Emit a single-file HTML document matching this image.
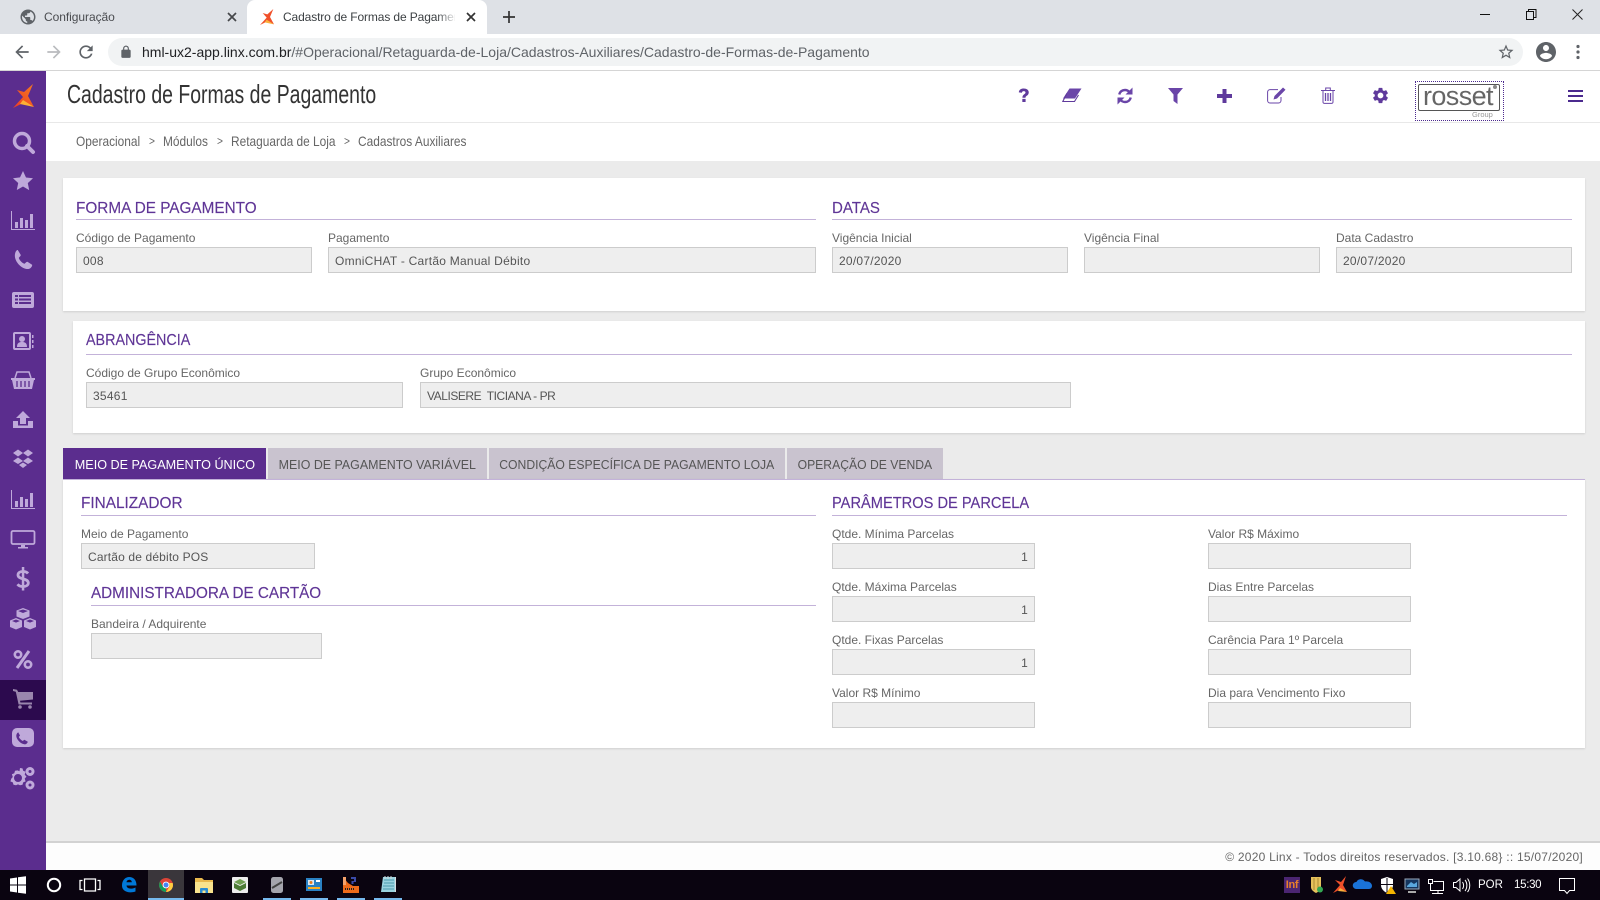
<!DOCTYPE html>
<html lang="pt"><head><meta charset="utf-8"><title>Cadastro de Formas de Pagamento</title>
<style>
html,body{margin:0;padding:0;width:1600px;height:900px;overflow:hidden;background:#ebebeb;font-family:"Liberation Sans",sans-serif}
.a,.l,.h,.r,.i,.t,.b,svg{position:absolute}
.a{white-space:nowrap}
.l{font-size:12px;line-height:14px;color:#666;white-space:nowrap}
.h{font-size:16px;line-height:20px;color:#5f3596;white-space:nowrap;transform-origin:0 50%;-webkit-text-stroke:.15px #5f3596}
.r{height:1px;background:#c3b2d9}
.i{box-sizing:border-box;background:#eee;border:1px solid #ccc;height:26px;font-size:12px;line-height:26px;color:#555;padding:0 6px;white-space:nowrap;letter-spacing:.25px}
.t{top:448px;height:31px;line-height:33px;font-size:13px;text-align:center;background:#c9c3cf;color:#555;white-space:nowrap}
.t span{display:inline-block}
.b{top:132px;font-size:14px;line-height:18px;color:#666;white-space:nowrap;transform-origin:0 50%;transform:scaleX(.85)}
.card{position:absolute;background:#fff;box-shadow:0 1px 2px rgba(0,0,0,.12)}
</style></head><body>

<!-- browser chrome -->
<div class="a" style="left:0;top:0;width:1600px;height:34px;background:#dee1e6"></div>
<div class="a" style="left:0;top:34px;width:1600px;height:36px;background:#fff"></div>
<div class="a" style="left:0;top:70px;width:1600px;height:1px;background:#d5d5d5"></div>
<div class="a" style="left:247px;top:0;width:240px;height:34px;background:#fff;border-radius:8px 8px 0 0"></div>
<svg style="left:19px;top:8px" width="18" height="18" viewBox="0 0 24 24"><path fill="#5f6368" d="M12 2C6.48 2 2 6.48 2 12s4.48 10 10 10 10-4.48 10-10S17.52 2 12 2zm-1 17.93c-3.95-.49-7-3.85-7-7.93 0-.62.08-1.21.21-1.79L9 15v1c0 1.1.9 2 2 2v1.93zm6.9-2.54c-.26-.81-1-1.39-1.9-1.39h-1v-3c0-.55-.45-1-1-1H8v-2h2c.55 0 1-.45 1-1V7h2c1.1 0 2-.9 2-2v-.41c2.93 1.19 5 4.06 5 7.41 0 2.08-.8 3.97-2.1 5.39z"/></svg>
<div class="a" style="left:44px;top:10px;font-size:12px;line-height:15px;color:#4a4c50;letter-spacing:-.05px">Configuração</div>
<svg style="left:227px;top:12px" width="10" height="10" viewBox="0 0 10 10"><path d="M1 1l8 8M9 1l-8 8" stroke="#45474a" stroke-width="1.7"/></svg>
<svg style="left:260px;top:9px" width="14" height="16" viewBox="13 84 21 24"><path fill="#f0502a" d="M13 108L23 97 17 90 24 92 33 84 28 96 34 107 25 102z"/><path fill="#fbb03b" d="M23 100L34 107 20 104z"/></svg>
<div class="a" style="left:283px;top:10px;width:172px;overflow:hidden;font-size:12px;line-height:15px;color:#3c4043;letter-spacing:-.12px">Cadastro de Formas de Pagamen</div>
<div class="a" style="left:437px;top:8px;width:20px;height:18px;background:linear-gradient(90deg,rgba(255,255,255,0),#fff)"></div>
<svg style="left:466px;top:12px" width="10" height="10" viewBox="0 0 10 10"><path d="M1 1l8 8M9 1l-8 8" stroke="#333" stroke-width="1.7"/></svg>
<svg style="left:503px;top:11px" width="12" height="12" viewBox="0 0 12 12"><path d="M6 0v12M0 6h12" stroke="#333" stroke-width="1.7"/></svg>
<svg style="left:1480px;top:9px" width="11" height="11" viewBox="0 0 11 11"><path d="M0 5.5h10" stroke="#111"/></svg>
<svg style="left:1526px;top:9px" width="11" height="11" viewBox="0 0 11 11"><path d="M.5 2.5h7v8h-7zM2.5 2.5v-2h7.5v8H7.5" stroke="#111" fill="none"/></svg>
<svg style="left:1572px;top:9px" width="11" height="11" viewBox="0 0 11 11"><path d="M.5.5l10 10M10.5.5l-10 10" stroke="#222"/></svg>

<svg style="left:12px;top:42px" width="20" height="20" viewBox="0 0 24 24"><path fill="#5f6368" d="M20 11H7.83l5.59-5.59L12 4l-8 8 8 8 1.41-1.41L7.83 13H20v-2z"/></svg>
<svg style="left:44px;top:42px" width="20" height="20" viewBox="0 0 24 24"><path fill="#b9bbbe" d="M12 4l-1.41 1.41L16.17 11H4v2h12.17l-5.58 5.59L12 20l8-8z"/></svg>
<svg style="left:76px;top:42px" width="20" height="20" viewBox="0 0 24 24"><path fill="#5f6368" d="M17.65 6.35C16.2 4.9 14.21 4 12 4c-4.42 0-7.99 3.58-7.99 8s3.57 8 7.99 8c3.73 0 6.84-2.55 7.73-6h-2.08c-.82 2.33-3.04 4-5.65 4-3.31 0-6-2.69-6-6s2.69-6 6-6c1.66 0 3.14.69 4.22 1.78L13 11h7V4l-2.35 2.35z"/></svg>
<div class="a" style="left:108px;top:38px;width:1415px;height:28px;border-radius:14px;background:#f1f3f4"></div>
<svg style="left:119px;top:45px" width="14" height="14" viewBox="0 0 24 24"><path fill="#5f6368" d="M18 8h-1V6c0-2.76-2.24-5-5-5S7 3.24 7 6v2H6c-1.1 0-2 .9-2 2v10c0 1.1.9 2 2 2h12c1.1 0 2-.9 2-2V10c0-1.1-.9-2-2-2zM9 6c0-1.66 1.34-3 3-3s3 1.34 3 3v2H9V6z"/></svg>
<div class="a" style="left:142px;top:44px;font-size:14px;line-height:16px;color:#5f6368"><span style="color:#202124">hml-ux2-app.linx.com.br</span>/#Operacional/Retaguarda-de-Loja/Cadastros-Auxiliares/Cadastro-de-Formas-de-Pagamento</div>
<svg style="left:1497px;top:43px" width="18" height="18" viewBox="0 0 24 24"><path fill="#5f6368" d="M22 9.24l-7.19-.62L12 2 9.19 8.63 2 9.24l5.46 4.73L5.82 21 12 17.27 18.18 21l-1.63-7.03L22 9.24zM12 15.4l-3.76 2.27 1-4.28-3.32-2.88 4.38-.38L12 6.1l1.71 4.04 4.38.38-3.32 2.88 1 4.28L12 15.4z"/></svg>
<svg style="left:1534px;top:40px" width="24" height="24" viewBox="0 0 24 24"><path fill="#5f6368" d="M12 2C6.48 2 2 6.48 2 12s4.48 10 10 10 10-4.48 10-10S17.52 2 12 2zm0 3c1.66 0 3 1.34 3 3s-1.34 3-3 3-3-1.34-3-3 1.34-3 3-3zm0 14.2c-2.5 0-4.71-1.28-6-3.22.03-1.99 4-3.08 6-3.08 1.99 0 5.97 1.09 6 3.08-1.29 1.94-3.5 3.22-6 3.22z"/></svg>
<svg style="left:1575px;top:44px" width="6" height="16" viewBox="0 0 6 16"><circle cx="3" cy="2.5" r="1.6" fill="#5f6368"/><circle cx="3" cy="8" r="1.6" fill="#5f6368"/><circle cx="3" cy="13.5" r="1.6" fill="#5f6368"/></svg>

<!-- header -->
<div class="a" style="left:46px;top:71px;width:1554px;height:90px;background:#fff"></div>
<div class="a" style="left:46px;top:122px;width:1554px;height:1px;background:#e8e8e8"></div>
<div class="a" style="left:67px;top:78px;font-size:26px;line-height:32px;color:#333;transform-origin:0 50%;transform:scaleX(.748)">Cadastro de Formas de Pagamento</div>

<svg style="left:1018px;top:88px" width="12" height="15" viewBox="0 0 13 17"><path fill="#5f3a9c" d="M.6 5C.8 2 3 .5 6.3.5c3.2 0 5.6 1.7 5.6 4.4 0 2-1.100 3-2.300 3.900-1 .7-1.400 1.200-1.400 2.200H4.700c0-1.900.6-2.800 1.900-3.800 1-.7 1.600-1.200 1.600-2.100 0-1-.8-1.500-1.900-1.500-1.300 0-2 .7-2.200 1.800zM4.600 12.300h3.700v3.600H4.600z"/></svg>
<svg style="left:1062px;top:88px" width="20" height="15" viewBox="0 0 20 15"><path fill="#6a45a8" d="M7.500.5H19.500L13 10.500H1z"/><path fill="none" stroke="#5f3a9c" stroke-width="1.100" d="M4.800 5.500L.8 13.500H12.500L16.500 7"/></svg>
<svg style="left:1117px;top:87px" width="16" height="18" viewBox="0 0 16 18"><path fill="none" stroke="#6a45a8" stroke-width="2.400" d="M2.300 7.500C3 4.500 5.300 3 8 3c1.900 0 3.300.8 4.400 2M13.700 10.500C13 13.500 10.700 15 8 15c-1.900 0-3.300-.8-4.400-2"/><path fill="#6a45a8" d="M15.500.5v7h-7zM.5 17.500v-7h7z"/></svg>
<svg style="left:1168px;top:88px" width="15" height="16" viewBox="0 0 15 16"><path fill="#6a45a8" d="M0 0h15L9.500 6.500V16L5.500 13V6.500z"/></svg>
<svg style="left:1217px;top:89px" width="15" height="14" viewBox="0 0 15 14"><path fill="#5f3a9c" d="M5.500 0h4v5H15v4H9.500v5h-4V9H0V5h5.500z"/></svg>
<svg style="left:1267px;top:87px" width="19" height="17" viewBox="0 0 19 17"><path fill="none" stroke="#6a45a8" stroke-width="1" d="M14 10v3.500a2.500 2.500 0 0 1-2.500 2.500H3A2.500 2.500 0 0 1 .6 13.500V5A2.500 2.500 0 0 1 3 2.600h8"/><path fill="#6a45a8" d="M16 .5l2.500 2.300-8.500 8.700-3.500 1 1-3.500z"/></svg>
<svg style="left:1321px;top:87px" width="14" height="17" viewBox="0 0 14 17"><path fill="none" stroke="#6a45a8" stroke-width="1" d="M0 3.500h14M2 3.500V15a1.500 1.500 0 0 0 1.500 1.400h7A1.500 1.500 0 0 0 12 15V3.500M4.700 3.300V1h4.600v2.300"/><path stroke="#6a45a8" stroke-width="1.300" d="M4.500 6v8M7 6v8M9.500 6v8"/></svg>
<svg style="left:1371px;top:86px" width="19" height="19" viewBox="0 0 24 24"><path fill="#5f3a9c" d="M19.140 12.940c.04-.3.06-.61.06-.94 0-.32-.02-.64-.07-.94l2.030-1.580c.18-.14.23-.41.12-.61l-1.920-3.320c-.12-.22-.37-.29-.59-.22l-2.390.96c-.5-.38-1.030-.7-1.620-.94l-.36-2.540c-.04-.24-.24-.41-.48-.41h-3.840c-.24 0-.43.17-.47.41l-.36 2.540c-.59.24-1.130.57-1.620.94l-2.390-.96c-.22-.08-.47 0-.59.22L2.740 8.870c-.12.21-.08.47.12.61l2.030 1.580c-.05.3-.09.63-.09.94s.02.64.07.94l-2.030 1.580c-.18.14-.23.41-.12.61l1.920 3.320c.12.22.37.29.59.22l2.390-.96c.5.38 1.030.7 1.620.94l.36 2.540c.05.24.24.41.48.41h3.840c.24 0 .44-.17.47-.41l.36-2.540c.59-.24 1.130-.56 1.620-.94l2.390.96c.22.08.47 0 .59-.22l1.920-3.320c.12-.22.07-.47-.12-.61l-2.010-1.580zM12 15.600c-1.980 0-3.600-1.620-3.600-3.600s1.620-3.600 3.600-3.600 3.600 1.620 3.600 3.600-1.620 3.600-3.600 3.600z"/></svg>

<div class="a" style="left:1415px;top:81px;width:87px;height:38px;border:1px dotted #4b2a8e"></div>
<div class="a" style="left:1418px;top:84px;width:80px;height:25px;border:1px solid #555;border-radius:2px;background:#fff"></div>
<div class="a" style="left:1423px;top:80px;font-size:27px;line-height:32px;color:#666;letter-spacing:-.6px">rosset</div>
<div class="a" style="left:1493px;top:85px;width:4px;height:4px;border-radius:50%;background:#888"></div>
<div class="a" style="left:1472px;top:110px;font-size:7.500px;line-height:9px;color:#999">Group</div>
<svg style="left:1568px;top:90px" width="15" height="12" viewBox="0 0 15 12"><path fill="#4b2a8e" d="M0 0h15v2H0zM0 5h15v2H0zM0 10h15v2H0z"/></svg>

<div class="b" style="left:76px">Operacional</div>
<div class="b" style="left:149px;font-size:12px">&gt;</div>
<div class="b" style="left:163px;transform:scaleX(.85)">Módulos</div>
<div class="b" style="left:217px;font-size:12px">&gt;</div>
<div class="b" style="left:231px">Retaguarda de Loja</div>
<div class="b" style="left:344px;font-size:12px">&gt;</div>
<div class="b" style="left:358px">Cadastros Auxiliares</div>

<!-- card 1 -->
<div class="card" style="left:63px;top:178px;width:1522px;height:133px"></div>
<div class="h" style="left:76px;top:199px;transform:scaleX(.957)">FORMA DE PAGAMENTO</div><div class="r" style="left:76px;top:219px;width:740px"></div>
<div class="h" style="left:832px;top:199px;transform:scaleX(.94)">DATAS</div><div class="r" style="left:832px;top:219px;width:740px"></div>
<div class="l" style="left:76px;top:231px">Código de Pagamento</div><div class="i" style="left:76px;top:247px;width:236px">008</div>
<div class="l" style="left:328px;top:231px">Pagamento</div><div class="i" style="left:328px;top:247px;width:488px">OmniCHAT - Cartão Manual Débito</div>
<div class="l" style="left:832px;top:231px">Vigência Inicial</div><div class="i" style="left:832px;top:247px;width:236px">20/07/2020</div>
<div class="l" style="left:1084px;top:231px">Vigência Final</div><div class="i" style="left:1084px;top:247px;width:236px"></div>
<div class="l" style="left:1336px;top:231px">Data Cadastro</div><div class="i" style="left:1336px;top:247px;width:236px">20/07/2020</div>

<!-- card 2 -->
<div class="card" style="left:73px;top:321px;width:1512px;height:112px"></div>
<div class="h" style="left:86px;top:331px;transform:scaleX(.895)">ABRANGÊNCIA</div><div class="r" style="left:86px;top:354px;width:1486px"></div>
<div class="l" style="left:86px;top:366px">Código de Grupo Econômico</div><div class="i" style="left:86px;top:382px;width:317px">35461</div>
<div class="l" style="left:420px;top:366px">Grupo Econômico</div><div class="i" style="left:420px;top:382px;width:651px;letter-spacing:-.45px">VALISERE&nbsp; TICIANA - PR</div>

<!-- tabs -->
<div class="t" style="left:63px;width:203px;background:#5b2d8e;color:#fff"><span style="transform:scaleX(.97)">MEIO DE PAGAMENTO ÚNICO</span></div>
<div class="t" style="left:268px;width:219px"><span style="transform:scaleX(.955)">MEIO DE PAGAMENTO VARIÁVEL</span></div>
<div class="t" style="left:489px;width:296px"><span style="transform:scaleX(.937)">CONDIÇÃO ESPECÍFICA DE PAGAMENTO LOJA</span></div>
<div class="t" style="left:787px;width:156px"><span style="transform:scaleX(.936)">OPERAÇÃO DE VENDA</span></div>
<div class="card" style="left:63px;top:479px;width:1522px;height:269px;border-top:1px solid #c3b2d9;box-sizing:border-box"></div>

<div class="h" style="left:81px;top:494px;transform:scaleX(.96)">FINALIZADOR</div><div class="r" style="left:81px;top:515px;width:735px"></div>
<div class="l" style="left:81px;top:527px">Meio de Pagamento</div><div class="i" style="left:81px;top:543px;width:234px;letter-spacing:.15px">Cartão de débito POS</div>
<div class="h" style="left:91px;top:584px;transform:scaleX(.953)">ADMINISTRADORA DE CARTÃO</div><div class="r" style="left:91px;top:605px;width:725px"></div>
<div class="l" style="left:91px;top:617px">Bandeira / Adquirente</div><div class="i" style="left:91px;top:633px;width:231px"></div>

<div class="h" style="left:832px;top:494px;transform:scaleX(.915)">PARÂMETROS DE PARCELA</div><div class="r" style="left:832px;top:515px;width:735px"></div>
<div class="l" style="left:832px;top:527px">Qtde. Mínima Parcelas</div><div class="i" style="left:832px;top:543px;width:203px;text-align:right">1</div>
<div class="l" style="left:832px;top:580px">Qtde. Máxima Parcelas</div><div class="i" style="left:832px;top:596px;width:203px;text-align:right">1</div>
<div class="l" style="left:832px;top:633px">Qtde. Fixas Parcelas</div><div class="i" style="left:832px;top:649px;width:203px;text-align:right">1</div>
<div class="l" style="left:832px;top:686px">Valor R$ Mínimo</div><div class="i" style="left:832px;top:702px;width:203px"></div>
<div class="l" style="left:1208px;top:527px">Valor R$ Máximo</div><div class="i" style="left:1208px;top:543px;width:203px"></div>
<div class="l" style="left:1208px;top:580px">Dias Entre Parcelas</div><div class="i" style="left:1208px;top:596px;width:203px"></div>
<div class="l" style="left:1208px;top:633px">Carência Para 1º Parcela</div><div class="i" style="left:1208px;top:649px;width:203px"></div>
<div class="l" style="left:1208px;top:686px">Dia para Vencimento Fixo</div><div class="i" style="left:1208px;top:702px;width:203px"></div>

<!-- footer -->
<div class="a" style="left:46px;top:841px;width:1554px;height:29px;background:#fdfdfd;border-top:2px solid #d2d2d2;box-sizing:border-box"></div>
<div class="a" style="right:17px;top:850px;font-size:12px;line-height:15px;color:#666;letter-spacing:.24px">© 2020 Linx - Todos direitos reservados. [3.10.68} :: 15/07/2020]</div>

<!-- sidebar -->
<div class="a" style="left:0;top:71px;width:46px;height:799px;background:#5b2d8e"></div>
<div class="a" style="left:0;top:680px;width:46px;height:40px;background:#2c0a4e"></div>
<svg style="left:13px;top:84px" width="21" height="24" viewBox="13 84 21 24"><defs><linearGradient id="lg" x1="0" y1="1" x2="1" y2="0"><stop offset="0" stop-color="#ee3a24"/><stop offset="1" stop-color="#f47b20"/></linearGradient></defs><path fill="url(#lg)" d="M13 108L23 97 17 90 24 92 33 84 28 96 34 107 25 102z"/><path fill="#fcb034" d="M23 100L34 107 20 104z"/></svg>
<svg style="left:0;top:119px" width="46" height="680" viewBox="0 120 46 680" fill="#bfa9da">
<!-- search -->
<circle cx="22" cy="142" r="7.500" fill="none" stroke="#bfa9da" stroke-width="3.500"/><path d="M27 147l6 6" stroke="#bfa9da" stroke-width="4" stroke-linecap="round"/>
<!-- star -->
<path transform="translate(0 1)" d="M23 171l3 6.500 7 .8-5.200 4.800 1.400 7L23 186.500 16.800 190l1.400-7-5.200-4.800 7-.8z"/>
<!-- chart -->
<path d="M12 212v18h23v1H11v-19z"/><path d="M15 223h3v6h-3zM20 219h3v10h-3zM25 221h3v8h-3zM30 215h3v14h-3z"/>
<!-- phone -->
<path d="M17.800 251l3 5c.3.600-1.800 2.400-2 3 1 2.600 3.200 4.800 5.600 5.800.6-.3 2.300-2.200 3-2l4.700 3c.4.600-.8 3.800-3.600 4.200-7 .5-14.800-8.100-13.500-15 .5-2.900 2-4.200 2.800-4z"/>
<!-- list -->
<path transform="translate(0 1)" fill-rule="evenodd" d="M14 292h18a2 2 0 0 1 2 2v12a2 2 0 0 1-2 2H14a2 2 0 0 1-2-2v-12a2 2 0 0 1 2-2zm1 3v2h3v-2zm4 0v2h12v-2zm-4 3.500v2h3v-2zm4 0v2h12v-2zm-4 3.500v2h3v-2zm4 0v2h12v-2z"/>
<!-- contacts -->
<g transform="translate(0 2)"><path fill-rule="evenodd" d="M15 331h14a2 2 0 0 1 2 2v14a2 2 0 0 1-2 2H15a2 2 0 0 1-2-2v-14a2 2 0 0 1 2-2zm0 2v14h14v-14z"/><circle cx="22" cy="338" r="3"/><path d="M17 346c0-4 2-5 5-5s5 1 5 5zM32 334h1.500v3H32zM32 339h1.500v3H32zM32 344h1.500v3H32z"/></g>
<!-- basket -->
<path d="M11 379h24v2h-1l-2 9H14l-2-9h-1z"/><path d="M15 379l2-6h12l2 6" fill="none" stroke="#bfa9da" stroke-width="1.500"/><path d="M17 382v6M21 382v6M25 382v6M29 382v6" stroke="#5b2d8e" stroke-width="1.300"/>
<!-- upload -->
<path transform="translate(0 1)" d="M23 411l7 7h-4v6h-6v-6h-4zM13 421h5v4.500h10V421h5v7H13z"/>
<!-- dropbox -->
<path d="M18 450.500l5 3.500-5 3.500-5-3.500zM28 450.500l5 3.500-5 3.500-5-3.500zM18 458.500l5 3.500 5-3.500 5 3.500-5 3-5-3-5 3-5-3z"/><path d="M19 466l4-2.500 4 2.500-4 3z"/>
<!-- chart2 -->
<path d="M12 491v18h23v1H11v-19z"/><path d="M15 502h3v6h-3zM20 498h3v10h-3zM25 500h3v8h-3zM30 494h3v14h-3z"/>
<!-- monitor -->
<g transform="translate(0 1)"><path fill="none" stroke="#bfa9da" stroke-width="1.800" d="M13 531h20a1.500 1.500 0 0 1 1.500 1.500v10a1.500 1.500 0 0 1-1.500 1.500H13a1.500 1.500 0 0 1-1.500-1.500v-10a1.500 1.500 0 0 1 1.500-1.500z"/><path d="M21 545h4v2h3v1.500H18V547h3z"/></g>
<!-- percent -->
<g transform="translate(0 1)"><path fill="none" stroke="#bfa9da" stroke-width="3" d="M29 651l-12 17"/><circle cx="18" cy="654.500" r="3.200" fill="none" stroke="#bfa9da" stroke-width="2.600"/><circle cx="28" cy="664.500" r="3.200" fill="none" stroke="#bfa9da" stroke-width="2.600"/></g>
<!-- phone square -->
<path fill-rule="evenodd" d="M17 729h12a5 5 0 0 1 5 5v9a5 5 0 0 1-5 5H17a5 5 0 0 1-5-5v-9a5 5 0 0 1 5-5zm1 4l2 3.500-1.200 1.500c.8 1.800 2.200 3 4 4l1.500-1.200 3.500 2c-.5 2-2 2.800-3.500 2.500-4-.7-7.500-4.500-8-8-.1-2 1-3.500 1.700-3.800z"/>
<!-- dollar -->
<g transform="translate(0 2)"><path fill="none" stroke="#bfa9da" stroke-width="2.800" d="M28 572.500c-1-1.300-2.800-2-5-2-3 0-5 1.300-5 3.500 0 5 10.300 2.800 10.300 8 0 2.200-2.300 3.500-5.300 3.500-2.300 0-4.300-.8-5.500-2.300"/><path d="M21.800 566h2.500v23.500h-2.500z"/></g>
<!-- cubes -->
<path d="M23 609l6.500 2.500v6L23 620l-6.500-2.500v-6z"/><path d="M16 619l6 2.500v6.500L16 630.500 10 628v-6.500z"/><path d="M30 619l6 2.500v6.500L30 630.500 24 628v-6.500z"/><path fill="#5b2d8e" d="M18 612l5 2 5-2-5-1.500zM12 622l4 1.600 4-1.600-4-1.500zM26 622l4 1.600 4-1.600-4-1.500z"/>
<!-- cart -->
<g transform="translate(0 -1)"><path fill="#9a86ad" d="M13 691l4 .8 1.200 2.200H33v7.500l-13 1.300.4 1.700H32v2H18.600l-2.800-12.800-2.800-.7z"/><circle cx="20" cy="709" r="1.800" fill="#9a86ad"/><circle cx="30" cy="709" r="1.800" fill="#9a86ad"/></g>
<!-- cogs -->
<g transform="translate(0 1)"><path fill-rule="evenodd" d="M20 769l2.500.4.700 2.400 2.400 1-.9 2.800 1.800 2-1.800 2 .9 2.800-2.400 1-.7 2.400-2.500.4-2-.8-2 .8-2.500-.4-.7-2.400-2.400-1 .9-2.800L11 780l1.800-2-.9-2.800 2.400-1 .7-2.400 2.500-.4 2 .8zm-2 6a4 4 0 1 0 0 8 4 4 0 0 0 0-8z" transform="translate(0 -1)"/><circle cx="30" cy="771.500" r="4.500"/><circle cx="30" cy="771.500" r="1.500" fill="#5b2d8e"/><circle cx="30" cy="785" r="4.500"/><circle cx="30" cy="785" r="1.500" fill="#5b2d8e"/></g>
</svg>

<!-- taskbar -->
<div class="a" style="left:0;top:870px;width:1600px;height:30px;background:#0a0410"></div>
<div class="a" style="left:148px;top:870px;width:36px;height:30px;background:#3a363b"></div>
<div class="a" style="left:148px;top:898px;width:36px;height:2px;background:#76b9ed"></div>
<div class="a" style="left:263px;top:898px;width:28px;height:2px;background:#76b9ed"></div>
<div class="a" style="left:300px;top:898px;width:28px;height:2px;background:#76b9ed"></div>
<div class="a" style="left:337px;top:898px;width:28px;height:2px;background:#76b9ed"></div>
<div class="a" style="left:374px;top:898px;width:28px;height:2px;background:#76b9ed"></div>
<svg style="left:0;top:870px" width="420" height="30" viewBox="0 0 420 30">
<path fill="#fff" d="M10 8.500l7-1v7h-7zM18 7.300l8-1.100v8.300h-8zM10 15.500h7v7l-7-1zM18 15.500h8v8.300l-8-1.100z"/>
<circle cx="54" cy="15" r="6.200" fill="none" stroke="#fff" stroke-width="2"/>
<path fill="none" stroke="#fff" stroke-width="1.300" d="M84.500 9h11v12h-11zM82.500 10.500h-2.500v9h2.500M97.500 10.500h2.500v9h-2.500"/>
<path fill="#0078d7" d="M129 7c5 0 7.500 3.500 7.500 8.500h-10c.3 3.500 5 4 9 2v4c-6 2-13.500.5-13.500-6 0-5 3-8.500 7-8.500zm-2.500 5.200h5.300c0-3.300-4.800-3.300-5.300 0z"/>
<circle cx="166" cy="15" r="7" fill="#db4437"/><path d="M166 22a7 7 0 0 1-6-10.500l3 5.500 3 1z" fill="#0f9d58"/><path d="M173 15a7 7 0 0 1-7 7l3.500-5.500-.5-3.500h3.700z" fill="#ffcd40"/><circle cx="166" cy="15" r="3.400" fill="#fff"/><circle cx="166" cy="15" r="2.500" fill="#4285f4"/>
<path fill="#e9b94e" d="M195 8h7l2 2h9v13h-18z"/><path fill="#f9e38e" d="M195 12h18v11h-18z"/><path fill="#2a8dd4" d="M200 23v-4a1 1 0 0 1 1-1h6a1 1 0 0 1 1 1v4h-2.500v-2.500h-3V23z"/>
<rect x="232" y="7" width="16" height="16" rx="1" fill="#eee"/><path fill="#6f9e50" d="M240 9l6 3-6 3-6-3z"/><path fill="#4c7a35" d="M234 13l6 3v5l-6-3zM246 13l-6 3v5l6-3z"/>
<rect x="271" y="7" width="12" height="16" rx="2.500" fill="#a5a5ad"/><path d="M272 18l10-6" stroke="#444" stroke-width="2"/>
<rect x="306" y="8" width="16" height="13" fill="#2a81c3"/><rect x="308" y="10" width="6" height="5" fill="#d9e8f4"/><rect x="316" y="10" width="4" height="2" fill="#fff"/><rect x="308" y="17" width="12" height="2" fill="#ffb020"/><circle cx="311" cy="12.500" r="1.500" fill="#e67c22"/>
<path fill="#ee6b1a" d="M343 7l5 6 5 3 6 0v7h-16z"/><path fill="#f5a36b" d="M343 7h3v8h-3z"/><path fill="#3a4aa8" d="M351 7h5v5h-2.500v2h-2v-3h2.500V9h-3z"/><path d="M345 19h9" stroke="#222" stroke-width="2" stroke-dasharray="1 1"/>
<path fill="#9ad3e0" d="M383 7h13v15h-15z"/><path d="M384 10h10M384 13h10M383 16h11M383 19h11" stroke="#4c98ad"/><path d="M385 6v3M388 6v3M391 6v3" stroke="#cfd8dc"/><path fill="#d7dce0" d="M396 7v15h-1V7z"/>
</svg>

<svg style="left:1270px;top:870px" width="330" height="30" viewBox="1270 870 330 30">
<rect x="1284" y="877" width="16" height="16" fill="#4b2572"/>
<path fill="#e6c15c" d="M1311 877h10v10c0 3-3 5-5 6-2-1-5-3-5-6z"/><path d="M1314 878v12M1318 878v10" stroke="#a98a34"/><circle cx="1320" cy="889.500" r="3" fill="#34a853"/>
<path fill="#f0502a" d="M1333 893L1340 885 1335 880 1341 882 1346 876 1343 885 1347 892 1341 889z"/><path fill="#fbb03b" d="M1340 888L1347 892 1338 891z"/>
<path fill="#1a73d8" d="M1356 889a3.500 3.500 0 0 1 .5-7c1-3 6-4 8.500-.5 3-.6 7 1 7 4.500 0 1.500-1.200 3-3 3z"/>
<path fill="#fff" d="M1381 879l6-2 6 2v6c0 4-3 6.500-6 8-3-1.500-6-4-6-8z"/><path fill="#0a0410" d="M1386.500 878h1v15h-1zM1381 884h12v1h-12z"/><path fill="#f4b400" d="M1391 886l5 8h-10z"/>
<rect x="1405" y="879" width="14" height="10" fill="#16365f" stroke="#9ab" stroke-width="1"/><path fill="#5aa7dd" d="M1407 886l4-4 3 2 3-2v5h-10z"/><path d="M1408 892h8" stroke="#aaa" stroke-width="2"/>
<path fill="none" stroke="#fff" d="M1428.500 879.500h4v4h-4zM1433.500 881.500h10v9h-10M1438 890.500v2.500M1432 893.500h11M1430.500 883.500v7h3"/>
<path fill="none" stroke="#fff" d="M1453.500 882.500h2.500l4-3.500v12l-4-3.500h-2.500zM1462.500 882c1.500 2 1.500 5 0 7M1465 880c2.500 3 2.500 8 0 11M1467.500 878.500c3 4 3 10 0 13.500"/>
<path fill="none" stroke="#fff" d="M1559.500 878.500h15v12h-5l-2.500 3-2.500-3h-5z"/>
</svg>
<div class="a" style="left:1276px;top:876px;width:32px;text-align:center;font-size:11px;line-height:18px;font-weight:bold;color:#e97f2a;letter-spacing:-.3px">Inf</div>
<div class="a" style="left:1478px;top:878px;font-size:11.500px;line-height:15px;color:#fff">POR</div>
<div class="a" style="left:1514px;top:878px;font-size:11.500px;line-height:15px;color:#fff;letter-spacing:-.3px">15:30</div>
</body></html>
